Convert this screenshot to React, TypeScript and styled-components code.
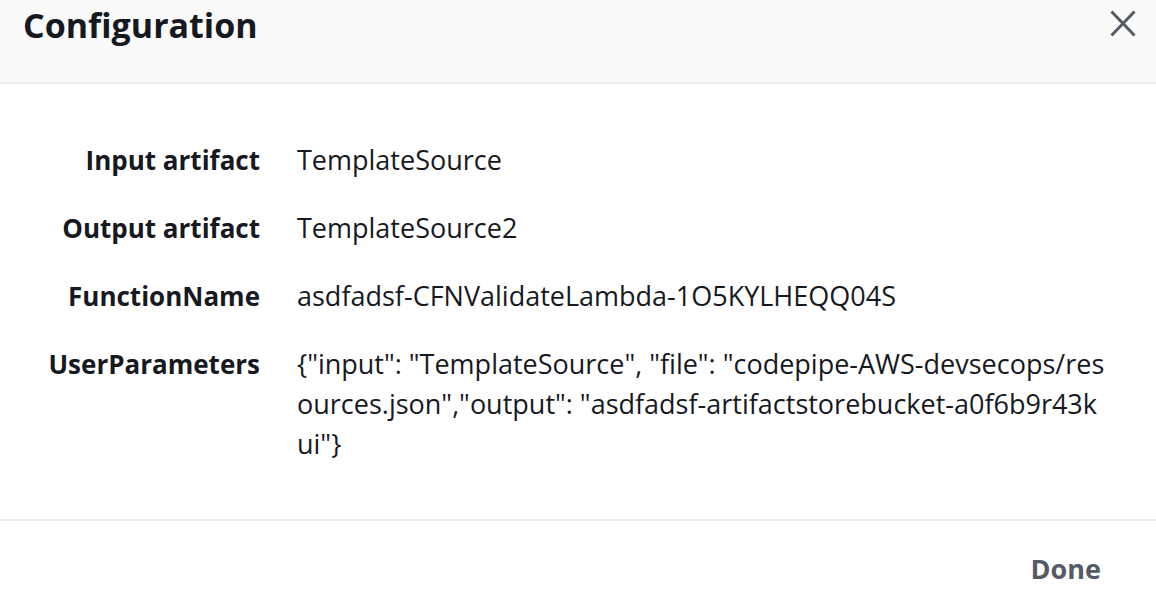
import React from "react"
import styled, { createGlobalStyle } from "styled-components"

// STYLES
const GlobalStyle = createGlobalStyle`
  html, body {
    margin: 0;
    padding: 0;
    background: #ffffff;
  }
  body {
    font-family: "Open Sans", "Noto Sans", "Liberation Sans", sans-serif;
    color: #16191f;
  }
  * {
    box-sizing: border-box;
  }
`

const Modal = styled.div`
  width: 1156px;
  height: 612px;
  display: flex;
  flex-direction: column;
  background: #ffffff;
  overflow: hidden;
`

const Header = styled.header`
  height: 84px;
  flex: none;
  display: flex;
  align-items: flex-start;
  justify-content: space-between;
  padding: 0 20px 0 23px;
  background: #fafafa;
  border-bottom: 2px solid #eaeded;
`

const Title = styled.h2`
  margin: 0;
  font-size: 34px;
  line-height: 50px;
  font-weight: 700;
  color: #16191f;
`

const CloseButton = styled.button`
  margin-top: 10px;
  padding: 0;
  width: 26px;
  height: 27px;
  border: none;
  background: transparent;
  color: #545b64;
  cursor: pointer;
  display: flex;
  svg {
    display: block;
  }
`

const Body = styled.div`
  flex: none;
  padding: 56px 46px 55px 40px;
  border-bottom: 2px solid #eaeded;
`

const DetailGrid = styled.dl`
  margin: 0;
  display: grid;
  grid-template-columns: 220px 1fr;
  column-gap: 37px;
  row-gap: 28px;
  font-size: 27px;
  line-height: 40px;
`

const Label = styled.dt`
  margin: 0;
  text-align: right;
  font-size: 26px;
  font-weight: 700;
  color: #16191f;
  white-space: nowrap;
`

const Value = styled.dd`
  margin: 0;
  color: #16191f;
  word-break: break-all;
`

const Footer = styled.footer`
  flex: 1;
  display: flex;
  justify-content: flex-end;
  align-items: flex-start;
  padding: 28px 40px 0 40px;
`

const TextButton = styled.button`
  border: none;
  background: transparent;
  padding: 0 15px;
  font-family: inherit;
  font-size: 27px;
  line-height: 40px;
  font-weight: 700;
  color: #545b64;
  cursor: pointer;
`

// DATA
const details = [
  { label: "Input artifact", value: "TemplateSource" },
  { label: "Output artifact", value: "TemplateSource2" },
  { label: "FunctionName", value: "asdfadsf-CFNValidateLambda-1O5KYLHEQQ04S" },
  {
    label: "UserParameters",
    value:
      '{"input": "TemplateSource", "file": "codepipe-AWS-devsecops/resources.json","output": "asdfadsf-artifactstorebucket-a0f6b9r43kui"}',
  },
]

const CloseIcon = () => (
  <svg width="26" height="27" viewBox="0 0 26 27" fill="none">
    <path d="M1.5 1.5L24.5 25.5M24.5 1.5L1.5 25.5" stroke="currentColor" strokeWidth="3" />
  </svg>
)

const App = () => {
  return (
    <>
      <GlobalStyle />
      <Modal>
        <Header>
          <Title>Configuration</Title>
          <CloseButton aria-label="Close">
            <CloseIcon />
          </CloseButton>
        </Header>
        <Body>
          <DetailGrid>
            {details.map(item => (
              <React.Fragment key={item.label}>
                <Label>{item.label}</Label>
                <Value>{item.value}</Value>
              </React.Fragment>
            ))}
          </DetailGrid>
        </Body>
        <Footer>
          <TextButton>Done</TextButton>
        </Footer>
      </Modal>
    </>
  )
}

export default App
